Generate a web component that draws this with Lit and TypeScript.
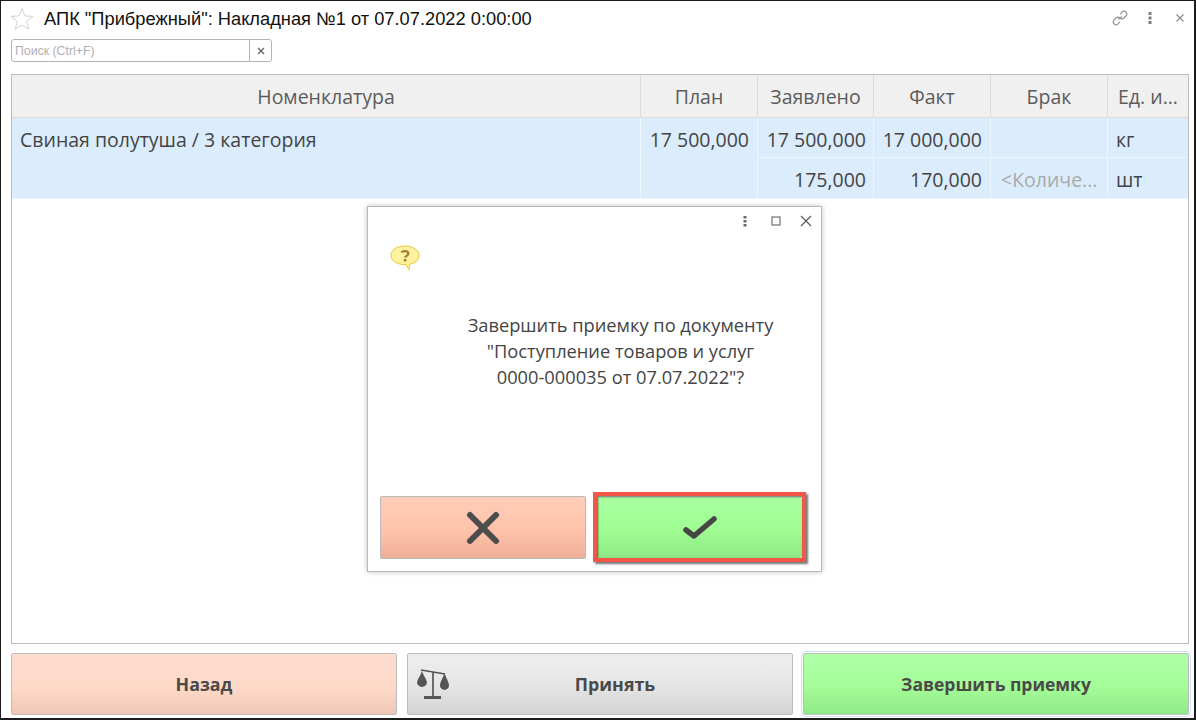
import { LitElement, html, css } from "lit";
import { customElement } from "lit/decorators.js";

@customElement("app-root")
export class AppRoot extends LitElement {
  static styles = css`
    :host { display: block; width: 1196px; height: 720px; position: relative; overflow: hidden; background: #fff; font-family: "Open Sans", sans-serif; color: #4a4a4a; }
    .frame { box-sizing: border-box; width: 1196px; height: 720px; border: solid #1c1c1c; border-width: 1px 2px 2px 1px; padding: 0 5px 3px 10px; display: flex; flex-direction: column; }
    .titlebar { height: 36px; display: flex; align-items: center; flex: none; }
    .star { margin-left: -1px; margin-right: 10px; flex: none; }
    .title { font: 18.3px "Liberation Sans", sans-serif; color: #111; flex: 1; white-space: nowrap; }
    .tools { display: flex; align-items: center; gap: 18px; margin-right: 4px; margin-top: -2px; }
    .tools svg { display: block; }
    .tools .dots { margin-left: 1px; }
    .tools .close { margin-left: 5px; }
    .search { box-sizing: border-box; margin-top: 2px; width: 261px; height: 23px; border: 1px solid #b4b4b4; border-radius: 3px; display: flex; flex: none; }
    .search .ph { flex: 1; font: 12.3px "Liberation Sans", sans-serif; color: #b0b0b0; padding-left: 3px; line-height: 22px; }
    .search .x { width: 21px; border-left: 1px solid #b4b4b4; display: flex; align-items: center; justify-content: center; }
    .table { box-sizing: border-box; margin-top: 12px; height: 570px; border: 1px solid #bdbdbd; flex: none; display: grid; grid-template-columns: 629px 117px 116px 117px 117px 80px; grid-template-rows: 43px 40px 41px 1fr; }
    .h { background: #f0f0f0; border-right: 1px solid #dcdcdc; border-bottom: 1px solid #dcdcdc; display: flex; align-items: center; justify-content: center; font-size: 19.5px; color: #5c5c5c; box-sizing: border-box; padding-top: 1px; white-space: nowrap; }
    .h:nth-child(6) { border-right: none; }
    .c { background: #dbedfd; border-right: 1px solid #eef6fd; border-bottom: 1px solid #eef6fd; box-sizing: border-box; font-size: 19.5px; color: #444; padding: 9px 8px 0; line-height: 25px; white-space: nowrap; }
    .c.last { border-right: none; }
    .r { text-align: right; }
    .narrow { padding-right: 7px; }
    .name { grid-row: span 2; }
    .plan { grid-row: span 2; }
    .muted { color: #a9a9a9; padding-left: 10px; padding-right: 6px; }
    .empty { grid-column: 1 / -1; background: #fff; }
    .bottom { margin-top: 9px; display: grid; grid-template-columns: 386px 386px 386px; gap: 10px; height: 62px; flex: none; }
    .btn { box-sizing: border-box; border: 1px solid #bdbdbd; border-radius: 2px; display: flex; align-items: center; justify-content: center; font-size: 17.8px; font-weight: 700; color: #4a4a4a; position: relative; }
    .back { background: linear-gradient(#fdddcf, #fdd8c7 60%, #efc8b5); }
    .accept { background: linear-gradient(#eeeeee, #e6e6e6 50%, #d4d4d4); padding-left: 30px; }
    .finish { background: linear-gradient(#b0ffa8, #a4fc98 55%, #8fe986); outline: 1px solid #cfe2fb; outline-offset: 1px; font-size: 17.5px; }
    .scale { position: absolute; left: 8px; top: 14px; }
    .dialog { position: absolute; left: 367px; top: 206px; width: 455px; height: 366px; box-sizing: border-box; background: #fff; border: 1px solid #b9b9b9; box-shadow: 0 0 5px rgba(0,0,0,.25); display: flex; flex-direction: column; padding: 0 15px 12px 12px; }
    .dbar { height: 28px; display: flex; align-items: center; justify-content: flex-end; flex: none; margin-right: -6px; }
    .dbar svg { display: block; }
    .dbar .sq { margin: 0 19px 0 24px; }
    .q { margin: 10px 0 0 10px; display: block; flex: none; }
    .msg { flex: none; margin: 39px 0 0 -12px; text-align: center; font-size: 18.25px; line-height: 26px; color: #444; width: 453px; padding-left: 52px; box-sizing: border-box; }
    .dbtns { margin-top: auto; display: grid; grid-template-columns: 206px 205px; gap: 11px; height: 63px; flex: none; }
    .dbtn { box-sizing: border-box; display: flex; align-items: center; justify-content: center; border-radius: 2px; }
    .no { background: linear-gradient(#fecdb9, #fec3aa 55%, #eeae97); border: 1px solid #b9b9b9; height: 63px; }
    .yes { background: linear-gradient(#a8ffa0, #9ffd93 55%, #8ee985); position: relative; height: 61px; margin-top: 1px; }
    .hl { position: absolute; left: -4px; top: -5px; right: -4px; bottom: -4px; border: 4px solid #f4564a; box-shadow: 2px 2px 2px rgba(0,0,0,.55), inset 1px 1px 2px rgba(0,0,0,.6); }
  `;

  render() {
    return html`
      <div class="frame">
        <div class="titlebar">
          <svg class="star" width="24" height="24" viewBox="0 0 24 24"><path d="M12 1.500l3 7.400 8 .5-6.200 5 2 7.800-6.800-4.200-6.800 4.200 2-7.800L1 9.400l8-.5z" fill="#fff" stroke="#d2d2d2" stroke-width="1"/></svg>
          <div class="title">АПК "Прибрежный": Накладная №1 от 07.07.2022 0:00:00</div>
          <div class="tools">
            <svg width="18" height="18" viewBox="0 0 16 16" fill="none" stroke="#8c8c8c" stroke-width="1"><path d="M6.500 9.500l3-3"/><path d="M8 4.500l2-2a2.500 2.500 0 0 1 3.500 3.500l-2 2a2.500 2.500 0 0 1-3.300.2"/><path d="M8 11.500l-2 2a2.500 2.500 0 0 1-3.500-3.500l2-2a2.500 2.500 0 0 1 3.300-.2"/></svg>
            <svg class="dots" width="4" height="12" viewBox="0 0 4 12" fill="#7c7c7c"><rect x="0.500" y="0" width="3" height="3"/><rect x="0.500" y="4.500" width="3" height="3"/><rect x="0.500" y="9" width="3" height="3"/></svg>
            <svg class="close" width="10" height="10" viewBox="0 0 10 10" stroke="#8a8a8a" stroke-width="1.200"><path d="M1.500 1.500l7 7M8.500 1.500l-7 7"/></svg>
          </div>
        </div>
        <div class="search">
          <div class="ph">Поиск (Ctrl+F)</div>
          <div class="x"><svg width="8" height="8" viewBox="0 0 8 8" stroke="#666" stroke-width="1.400"><path d="M1 1l6 6M7 1L1 7"/></svg></div>
        </div>
        <div class="table">
          <div class="h">Номенклатура</div>
          <div class="h">План</div>
          <div class="h">Заявлено</div>
          <div class="h">Факт</div>
          <div class="h">Брак</div>
          <div class="h">Ед. и...</div>
          <div class="c name">Свиная полутуша / 3 категория</div>
          <div class="c plan r">17 500,000</div>
          <div class="c r narrow">17 500,000</div>
          <div class="c r">17 000,000</div>
          <div class="c"></div>
          <div class="c last">кг</div>
          <div class="c r narrow">175,000</div>
          <div class="c r">170,000</div>
          <div class="c muted">&lt;Количе...</div>
          <div class="c last">шт</div>
          <div class="empty"></div>
        </div>
        <div class="bottom">
          <div class="btn back">Назад</div>
          <div class="btn accept">
            <svg class="scale" width="36" height="32" viewBox="0 0 36 32" fill="#555"><path d="M5 2l24 4" stroke="#555" stroke-width="1.500" fill="none"/><path d="M17 4V28" stroke="#555" stroke-width="1.700"/><rect x="8" y="28" width="17" height="3"/><path d="M6 3c1.500 5 4.900 8.500 4.900 11.500a4.900 4.400 0 0 1-9.800 0C1.100 11.500 4.500 8 6 3z"/><path d="M28.500 5c1.500 5 4.500 9 4.500 12.500a4.500 4.400 0 0 1-9 0C24 14 27 10 28.500 5z"/></svg>
            Принять
          </div>
          <div class="btn finish">Завершить приемку</div>
        </div>
      </div>
      <div class="dialog">
        <div class="dbar">
          <svg width="4" height="11" viewBox="0 0 4 11" fill="#666"><rect x="0.500" y="0" width="3" height="2.500"/><rect x="0.500" y="4" width="3" height="2.500"/><rect x="0.500" y="8" width="3" height="2.500"/></svg>
          <svg class="sq" width="10" height="10" viewBox="0 0 10 10" fill="none" stroke="#555" stroke-width="1"><rect x="1" y="1" width="8" height="8"/></svg>
          <svg width="12" height="12" viewBox="0 0 12 12" stroke="#555" stroke-width="1.100"><path d="M1 1l10 10M11 1L1 11"/></svg>
        </div>
        <svg class="q" width="30" height="28" viewBox="0 0 30 28">
          <defs><linearGradient id="qg" x1="0" y1="0" x2="0" y2="1"><stop offset="0" stop-color="#fdf3a0"/><stop offset="1" stop-color="#fff29a"/></linearGradient></defs>
          <path d="M15 1c7.500 0 14 3.500 14 9.500 0 5-4.500 8-9.500 8.800L19 25l-3-5.500C8 20 1 16.500 1 10.500 1 4.500 7.500 1 15 1z" fill="url(#qg)" stroke="#e3c93d" stroke-width="1"/>
          <path d="M11.500 7.500c.8-1.700 6.800-2.200 6.800 1 0 2.300-3.200 2.300-3.200 4.300" fill="none" stroke="#a27c3b" stroke-width="2.200"/><rect x="13.800" y="14" width="2.600" height="2.500" fill="#a27c3b"/>
        </svg>
        <div class="msg">Завершить приемку по документу<br>"Поступление товаров и услуг<br>0000-000035 от 07.07.2022"?</div>
        <div class="dbtns">
          <div class="dbtn no"><svg width="36" height="36" viewBox="0 0 36 36" stroke="#4d4d4d" stroke-width="6" stroke-linecap="round"><path d="M5 5l26 26M31 5L5 31"/></svg></div>
          <div class="dbtn yes">
            <svg width="34" height="26" viewBox="0 0 34 26" fill="none" stroke="#464646" stroke-width="5.500" stroke-linecap="round" stroke-linejoin="round"><path d="M3 15l8 6L31 4"/></svg>
            <div class="hl"></div>
          </div>
        </div>
      </div>
    `;
  }
}
